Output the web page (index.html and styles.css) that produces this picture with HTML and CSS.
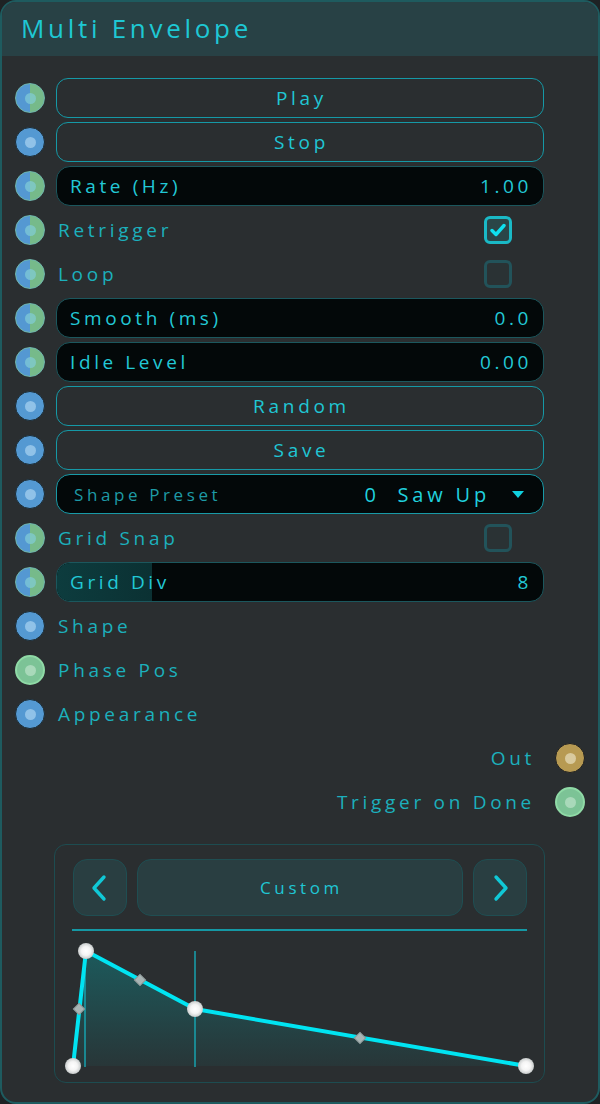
FILE: index.html
```html
<!DOCTYPE html>
<html>
<head>
<meta charset="utf-8">
<link rel="stylesheet" href="styles.css">
</head>
<body>
<div class="panel">
  <div class="header"><span class="title">Multi Envelope</span></div>
  <div class="body">
    <div class="row"><span class="port split"><i></i></span><div class="btn">Play</div></div>
    <div class="row"><span class="port blue"><i></i></span><div class="btn">Stop</div></div>
    <div class="row"><span class="port split"><i></i></span><div class="field"><span>Rate (Hz)</span><span>1.00</span></div></div>
    <div class="row"><span class="port split"><i></i></span><div class="lab"><span>Retrigger</span><span class="check on"><svg width="16" height="14" viewBox="0 0 16 14"><path d="M2 7.5 L6 11.5 L14 2.5" fill="none" stroke="#0fe0ee" stroke-width="3.4" stroke-linecap="round" stroke-linejoin="round"/></svg></span></div></div>
    <div class="row"><span class="port split"><i></i></span><div class="lab"><span>Loop</span><span class="check"></span></div></div>
    <div class="row"><span class="port split"><i></i></span><div class="field"><span>Smooth (ms)</span><span>0.0</span></div></div>
    <div class="row"><span class="port split"><i></i></span><div class="field"><span>Idle Level</span><span>0.00</span></div></div>
    <div class="row"><span class="port blue"><i></i></span><div class="btn">Random</div></div>
    <div class="row"><span class="port blue"><i></i></span><div class="btn">Save</div></div>
    <div class="row"><span class="port blue"><i></i></span><div class="drop"><span class="dlab">Shape Preset</span><span class="dval">0&nbsp;&nbsp;Saw Up</span><span class="caret"></span></div></div>
    <div class="row"><span class="port split"><i></i></span><div class="lab"><span>Grid Snap</span><span class="check"></span></div></div>
    <div class="row"><span class="port split"><i></i></span><div class="field gridiv"><span class="fill"></span><span>Grid Div</span><span>8</span></div></div>
    <div class="row"><span class="port blue"><i></i></span><div class="lab"><span>Shape</span></div></div>
    <div class="row"><span class="port green"><i></i></span><div class="lab"><span>Phase Pos</span></div></div>
    <div class="row"><span class="port blue"><i></i></span><div class="lab"><span>Appearance</span></div></div>
    <div class="row out"><span class="olab">Out</span><span class="port gold"><i></i></span></div>
    <div class="row out"><span class="olab">Trigger on Done</span><span class="port green"><i></i></span></div>

    <div class="editor">
      <div class="nav">
        <div class="nbtn"><svg width="20" height="30" viewBox="0 0 20 30"><path d="M14 4 L4 15 L14 26" fill="none" stroke="#10c8d6" stroke-width="3.4" stroke-linecap="round" stroke-linejoin="round"/></svg></div>
        <div class="nbtn mid">Custom</div>
        <div class="nbtn"><svg width="20" height="30" viewBox="0 0 20 30"><path d="M6 4 L16 15 L6 26" fill="none" stroke="#10c8d6" stroke-width="3.4" stroke-linecap="round" stroke-linejoin="round"/></svg></div>
      </div>
      <div class="sep"></div>
      <svg class="graph" width="489" height="150" viewBox="55 932 489 150">
        <defs>
          <linearGradient id="g" x1="0" y1="0" x2="0" y2="1">
            <stop offset="0" stop-color="#1c5a5c"/>
            <stop offset="1" stop-color="#283638"/>
          </linearGradient>
          <radialGradient id="pt" cx="0.5" cy="0.5" r="0.5">
            <stop offset="0" stop-color="#ffffff"/>
            <stop offset="0.55" stop-color="#f4f4f4"/>
            <stop offset="1" stop-color="#c8cccc"/>
          </radialGradient>
        </defs>
        <polygon points="73,1067 86,952 195,1010 526,1067" fill="url(#g)"/>
        <line x1="85" y1="952" x2="85" y2="1068" stroke="#17a2ae" stroke-width="1.5"/>
        <line x1="195" y1="952" x2="195" y2="1068" stroke="#17a2ae" stroke-width="1.5"/>
        <polyline points="73,1067 86,952 195,1010 526,1067" fill="none" stroke="#00e4f2" stroke-width="4" stroke-linejoin="round"/>
        <g fill="#a8b4b4" stroke="#8a9696" stroke-width="1">
          <rect x="75" y="1006" width="8" height="8" transform="rotate(45 79 1010)"/>
          <rect x="136" y="977" width="8" height="8" transform="rotate(45 140 981)"/>
          <rect x="356" y="1035" width="8" height="8" transform="rotate(45 360 1039)"/>
        </g>
        <g fill="url(#pt)">
          <circle cx="73" cy="1067" r="8"/>
          <circle cx="86" cy="952" r="8"/>
          <circle cx="195" cy="1010" r="8"/>
          <circle cx="526" cy="1067" r="8"/>
        </g>
      </svg>
    </div>
  </div>
</div>
</body>
</html>
```
FILE: styles.css
```css
* { box-sizing: border-box; }
html, body { margin: 0; padding: 0; background: #1e2224; }
body { font-family: "Open Sans", "Noto Sans", sans-serif; }
.panel {
  width: 600px; height: 1104px;
  border: 2px solid #1e5b5f;
  border-radius: 16px;
  background: #2a2e30;
  overflow: hidden;
  display: flex; flex-direction: column;
}
.header {
  height: 54px;
  background: #284145;
  padding-left: 19px;
  display: flex; align-items: center;
}
.title {
  color: #1ec8d4;
  font-size: 26px;
  letter-spacing: 3.7px;
  margin-top: -2px;
}
.body {
  padding: 22px 0 0 0;
  display: flex; flex-direction: column; gap: 4px;
}
.row {
  height: 40px;
  display: flex; align-items: center;
  padding-left: 13px;
  padding-right: 54px;
}
.port {
  width: 30px; height: 30px; border-radius: 50%;
  flex: none;
  display: flex; align-items: center; justify-content: center;
  margin-right: 11px;
}
.port i { width: 11px; height: 11px; border-radius: 50%; display: block; }
.port.split { background: linear-gradient(to right, #5498d2 50%, #76ba8a 50%); border: 1.5px solid #6fb7ad; }
.port.split i { background: rgba(130, 205, 215, 0.7); }
.port.blue { background: #5499d2; border: 1.5px solid #1b2b33; }
.port.blue i { background: #90c2e8; }
.port.green { background: #7cc396; border: 2px solid #8fdaa6; }
.port.green i { background: #a9d9ba; }
.port.gold { background: #b79a52; border: 1.5px solid #1e2022; }
.port.gold i { background: #d9ca9e; }

.btn {
  flex: 1; height: 40px;
  border: 1px solid #1599a6; border-radius: 12px;
  display: flex; align-items: center; justify-content: center;
  color: #20c6d4; font-size: 19px; letter-spacing: 3.7px;
  padding-left: 3px;
}
.field {
  flex: 1; height: 40px; position: relative; overflow: hidden;
  background: #030809;
  border: 1px solid #1b575d; border-radius: 14px;
  display: flex; align-items: center; justify-content: space-between;
  padding: 0 11px 0 13px;
  color: #22c8d6; font-size: 19px; letter-spacing: 3.6px;
}
.field span { position: relative; }
.gridiv .fill {
  position: absolute; left: 0; top: 0; bottom: 0; width: 95px;
  background: linear-gradient(to right, #0d3c3e, #0b3133);
  border-radius: 13px 0 0 13px;
}
.lab {
  flex: 1; height: 40px;
  display: flex; align-items: center; justify-content: space-between;
  padding-left: 2px; padding-right: 32px;
  color: #1cb0bc; font-size: 19px; letter-spacing: 3.7px;
}
.check {
  width: 28px; height: 28px; border-radius: 6px;
  border: 3px solid #22535a; background: #2a3234;
  display: flex; align-items: center; justify-content: center;
}
.check.on { border-color: #1ab9c6; background: #2a4648; }
.drop {
  flex: 1; height: 40px;
  border: 1.5px solid #189aa7; border-radius: 14px;
  background: #030809;
  display: flex; align-items: center;
  padding: 0 19px 0 17px;
}
.dlab { color: #1e9aa6; font-size: 17px; letter-spacing: 3.6px; flex: 1; }
.dval { color: #20d0de; font-size: 20px; letter-spacing: 3.8px; margin-right: 22px; }
.caret {
  width: 0; height: 0;
  border-left: 6px solid transparent; border-right: 6px solid transparent;
  border-top: 7px solid #10d0de;
}
.row.out { justify-content: flex-end; padding-right: 13px; }
.row.out .port { margin-right: 0; margin-left: 20px; }
.olab { color: #1cb0bc; font-size: 19px; letter-spacing: 3.7px; }

.editor {
  margin: 18px 0 0 52px;
  width: 491px; height: 239px;
  border: 1px solid #1d4c50; border-radius: 12px;
  padding: 14px 17px 0 18px;
  display: flex; flex-direction: column;
  overflow: hidden;
}
.nav {
  display: grid; grid-template-columns: 54px 1fr 54px; gap: 10px;
  height: 57px;
}
.nbtn {
  background: #293e41; border: 1.5px solid #1f4e52; border-radius: 14px;
  display: flex; align-items: center; justify-content: center;
}
.nbtn.mid { color: #20c6d4; font-size: 17px; letter-spacing: 3.6px; padding-left: 3px; }
.sep { height: 2px; background: #1598a4; margin: 13px 0 0 -1px; }
.graph { display: block; margin-left: -18px; }
```
